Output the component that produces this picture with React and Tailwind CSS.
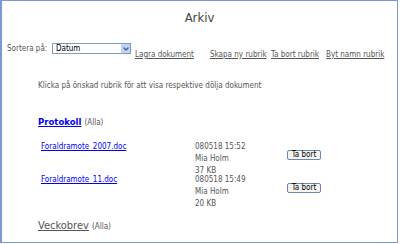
export default function App() {
  const font = { fontFamily: '"DejaVu Sans Condensed", "DejaVu Sans", Verdana, sans-serif' };
  const files = [
    { name: "Foraldramote_2007.doc", date: "080518 15:52", who: "Mia Holm", size: "37 KB" },
    { name: "Foraldramote_11.doc", date: "080518 15:49", who: "Mia Holm", size: "20 KB" },
  ];
  return (
    <div className="w-[400px] h-[244px] bg-white overflow-hidden whitespace-nowrap" style={font}>
      <div className="w-[398px] h-[243px] border border-l-2 border-[#7a98d4] bg-white flex flex-col text-[#555]">
        <div className="text-center text-[13px] leading-[13px] pt-[10px] text-[#444]">Arkiv</div>
        <div className="flex items-start mt-[19px] h-[16px] text-[8px] leading-[9px]">
          <span className="w-[50px] pl-[5px] mt-[1px]">Sortera på:</span>
          <div className="w-[79px] h-[11px] border border-[#7f9db9] flex items-center justify-between bg-white">
            <span className="pl-[3px] text-[8px] text-black leading-none">Datum</span>
            <span className="w-[9px] h-[9px] bg-[#c1d3fb] flex items-center justify-center">
              <svg width="6" height="4" viewBox="0 0 6 4"><path d="M0.5 0.5 L3 3 L5.5 0.5" fill="none" stroke="#4d6185" strokeWidth="1.4" /></svg>
            </span>
          </div>
          <a className="underline ml-[4px] w-[75px] mt-[7px] text-[#555]">Lagra dokument</a>
          <a className="underline w-[61px] mt-[7px] text-[#555]">Skapa ny rubrik</a>
          <a className="underline w-[55px] mt-[7px] text-[#555]">Ta bort rubrik</a>
          <a className="underline mt-[7px] text-[#555]">Byt namn rubrik</a>
        </div>
        <div className="pl-[36px] mt-[22px] text-[8px] leading-[9px]">Klicka på önskad rubrik för att visa respektive dölja dokument</div>
        <div className="pl-[36px] mt-[26px] flex items-baseline h-[12px] leading-[12px]">
          <a className="underline font-bold text-[9.5px] text-[#0000ee]">Protokoll</a>
          <span className="text-[8px] ml-[3px]">(Alla)</span>
        </div>
        <div className="flex flex-col mt-[13px]">
          {files.map((f, i) => (
            <div key={i} className="flex text-[8px] pl-[39px] h-[33px]">
              <div className="w-[154px] h-[12px] leading-[12px]">
                <a className="underline text-[#0000ee]">{f.name}</a>
              </div>
              <div className="w-[92px] flex flex-col">
                <div className="h-[12px] leading-[12px]">{f.date}</div>
                <div className="h-[12px] leading-[12px]">{f.who}</div>
                <div className="h-[11px] leading-[11px]">{f.size}</div>
              </div>
              <div className="pt-[8px]">
                <button className="h-[10px] w-[34px] border border-[#6b86b8] rounded-[2px] bg-[#f4f4f0] text-[8px] leading-none text-black">Ta bort</button>
              </div>
            </div>
          ))}
        </div>
        <div className="pl-[36px] mt-[12px] flex items-baseline h-[14px] leading-[14px]">
          <a className="underline text-[11px] text-[#555]">Veckobrev</a>
          <span className="text-[8px] ml-[3px]">(Alla)</span>
        </div>
      </div>
    </div>
  );
}
